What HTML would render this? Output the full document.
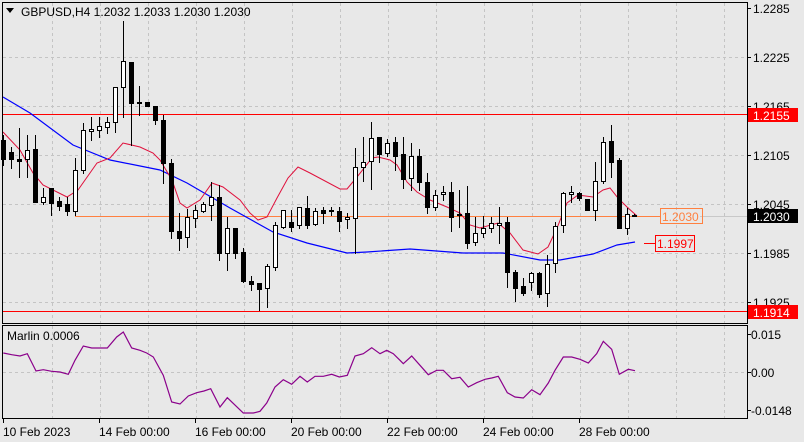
<!DOCTYPE html>
<html><head><meta charset="utf-8"><style>
html,body{margin:0;padding:0;background:#e8e8e8;width:804px;height:442px;overflow:hidden}
svg{display:block}
text{font-family:"Liberation Sans",sans-serif;font-size:12px;fill:#000}
</style></head><body>
<svg id="s" width="804" height="442" xmlns="http://www.w3.org/2000/svg">
<rect x="0" y="0" width="804" height="442" fill="#e8e8e8"/>
<g id="grid" stroke="#c4c4c4" stroke-dasharray="3,3" stroke-width="1"></g>
<line x1="2" y1="114.5" x2="747" y2="114.5" stroke="#ff0000"/>
<line x1="2" y1="311.5" x2="747" y2="311.5" stroke="#ff0000"/>
<line x1="700" y1="216.5" x2="747" y2="216.5" stroke="#c8c8c8"/>
<line x1="75" y1="216.5" x2="660" y2="216.5" stroke="#ff8040"/>
<polyline id="blue" fill="none" stroke="#0000ff" stroke-width="1.2"/>
<polyline id="red" fill="none" stroke="#e0103c" stroke-width="1"/>
<g id="candles"></g>
<polyline id="marlin" fill="none" stroke="#8b008b" stroke-width="1.2"/>
<rect x="2.5" y="2.5" width="745" height="321" fill="none" stroke="#000"/>
<rect x="2.5" y="325.5" width="745" height="93" fill="none" stroke="#000"/>
<rect x="660.5" y="208.5" width="42" height="15" fill="none" stroke="#ff8040"/>
<text x="662" y="221" style="fill:#ff8040">1.2030</text>
<line x1="644" y1="243.5" x2="655" y2="243.5" stroke="#ff0000"/>
<rect x="655.5" y="235.5" width="39" height="16" fill="none" stroke="#ff0000"/>
<text x="657" y="248" style="fill:#ff0000">1.1997</text>
<path d="M6 8 L14 8 L10 13 Z" fill="#000"/>
<text x="21" y="16">GBPUSD,H4  1.2032 1.2033 1.2030 1.2030</text>
<text x="7" y="340">Marlin 0.0006</text>
<g id="axis"></g>
<rect x="748" y="108" width="50" height="14" fill="#ff0000"/>
<text x="753" y="120" style="fill:#fff">1.2155</text>
<rect x="748" y="209" width="50" height="14" fill="#000"/>
<text x="753" y="221" style="fill:#fff">1.2030</text>
<rect x="748" y="305" width="50" height="14" fill="#ff0000"/>
<text x="753" y="317" style="fill:#fff">1.1914</text>
<text x="751" y="339">0.015</text>
<text x="751" y="377">0.00</text>
<text x="751" y="415">-0.0148</text>
<g id="dates"></g>
</svg>
<script>
var NS="http://www.w3.org/2000/svg";
function el(p,t,a,txt){var e=document.createElementNS(NS,t);for(var k in a)e.setAttribute(k,a[k]);if(txt)e.textContent=txt;document.getElementById(p).appendChild(e);return e;}
for(var x=52;x<=724;x+=48){el('grid','line',{x1:x+.5,y1:3,x2:x+.5,y2:323});el('grid','line',{x1:x+.5,y1:326,x2:x+.5,y2:418});}
[57,106,155,204,253,302].forEach(function(y){el('grid','line',{x1:3,y1:y+.5,x2:747,y2:y+.5});});
el('grid','line',{x1:3,y1:372.5,x2:747,y2:372.5});
[["1.2285",8],["1.2225",57],["1.2165",106],["1.2105",155],["1.2045",204],["1.1985",253],["1.1925",302]].forEach(function(a){
el('axis','line',{x1:747,y1:a[1]+.5,x2:751,y2:a[1]+.5,stroke:'#000'});el('axis','text',{x:753,y:a[1]+5},a[0]);});
[334,372,410].forEach(function(y){el('axis','line',{x1:747,y1:y+.5,x2:751,y2:y+.5,stroke:'#000'});});
[["10 Feb 2023",3],["14 Feb 00:00",99],["16 Feb 00:00",195],["20 Feb 00:00",291],["22 Feb 00:00",387],["24 Feb 00:00",483],["28 Feb 00:00",579]].forEach(function(a){
el('dates','line',{x1:a[1]+.5,y1:418,x2:a[1]+.5,y2:423,stroke:'#000'});el('dates','text',{x:a[1],y:436},a[0]);});
var C=[[135,140,159,165,0],[147,152,159,168,0],[128,159,161,177,0],[135,150,159,177,1],[135,149,202,202,0],[188,197,202,204,1],[188,188,203,215,0],[197,201,206,210,0],[197,204,211,215,0],[158,170,211,215,1],
[123,130,170,173,1],[117,129,131,140,1],[117,126,130,137,1],[117,122,127,133,1],[87,87,122,132,1],[21,61,87,117,1],[62,62,103,145,0],[86,102,103,115,0],[102,102,106,106,0],[106,106,120,124,0],
[115,120,163,183,0],[159,163,231,238,0],[213,231,238,250,0],[209,217,237,247,1],[205,210,218,227,1],[202,204,211,212,1],[182,197,205,220,1],[185,197,253,260,0],[217,228,253,270,1],[228,228,253,258,0],
[248,252,281,282,0],[276,281,284,290,0],[283,283,289,310,0],[264,266,288,307,1],[222,225,267,270,1],[210,210,227,228,1],[210,222,227,231,0],[207,207,225,228,1],[196,208,225,228,0],[208,211,224,225,1],
[207,210,213,223,0],[207,210,211,215,0],[207,211,221,231,0],[213,217,219,228,1],[148,167,218,253,1],[137,162,167,181,1],[122,138,161,189,1],[137,137,154,162,0],[139,143,153,156,1],[137,142,156,170,0],
[137,154,179,188,0],[143,156,178,190,1],[149,156,182,190,0],[173,182,207,213,0],[190,195,207,210,1],[186,192,194,200,1],[182,192,217,231,0],[190,214,215,227,0],[186,213,243,248,0],[217,233,242,245,1],
[216,228,233,237,1],[217,223,228,232,1],[207,223,225,243,1],[217,222,272,287,0],[270,272,288,301,0],[278,286,293,295,0],[272,273,282,290,1],[272,273,294,297,0],[255,264,293,306,1],[222,226,263,272,1],
[192,193,225,232,1],[186,192,194,202,1],[192,193,198,200,0],[199,199,210,210,0],[162,181,210,220,1],[137,142,181,183,1],[125,141,162,177,0],[158,160,228,228,0],[208,214,228,234,1],[214,215,216,216,0]];
C.forEach(function(c,i){var x=3+8*i;if(i==79)x=634;
el('candles','line',{x1:x+.5,y1:c[0],x2:x+.5,y2:c[3]+1,stroke:'#000'});
var h=Math.max(c[2]-c[1],1);
el('candles','rect',{x:x-1.5,y:c[1]+.5,width:4,height:h,fill:c[4]?'#fff':'#000',stroke:'#000'});});
document.getElementById('red').setAttribute('points',"3,132 20,150 33,173 43,185 67,197 78,190 97,163 110,158 123,143 140,147 153,153 160,160 172,180 180,203 187,208 200,200 212,183 223,187 240,200 250,213 258,220 267,217 277,198 288,178 298,167 310,173 340,189 347,189 357,177 372,158 378,157 390,160 397,165 407,182 417,192 430,200 447,207 460,213 470,225 480,228 498,223 510,233 523,250 538,254 548,247 557,228 567,203 578,195 593,197 603,190 610,188 618,198 627,207 637,216");
document.getElementById('blue').setAttribute('points',"3,97 30,113 73,145 110,160 160,170 187,183 230,208 273,232 307,243 347,253 367,252 410,249 463,253 503,253 540,260 560,260 593,254 617,245 635,242");
var m=[[10,93],[35,98],[60,102],[82,95],[108,147],[130,143],[155,148],[180,150],[205,157],[225,115],[250,72],[275,78],[322,78],[350,45],[370,30],[395,78],[420,85],[440,93],[460,105],[490,160],[515,240],[540,246],[565,222],[590,212],[612,207],[632,200],[660,255],[682,227],[730,273],[760,273],[780,268],[800,243],[825,195],[850,173],[875,187],[900,163],[922,180],[945,163],[970,163],[995,157],[1018,165],[1042,160],[1065,102],[1090,95],[1115,77],[1140,95],[1160,85],[1180,95],[1200,115]];
var pts=m.map(function(p){return (p[0]/3).toFixed(1)+","+(p[1]/3+322).toFixed(1)});
var m2=[[10,125],[35,102],[60,130],[85,158],[110,145],[130,145],[155,170],[180,166],[205,195],[230,182],[255,172],[275,168],[295,163],[322,212],[345,225],[370,228],[395,203],[420,218],[445,183],[465,145],[490,105],[515,105],[540,112],[565,123],[590,95],[610,58],[635,82],[658,157],[685,142],[705,146]];
m2.forEach(function(p){pts.push((p[0]/3+400).toFixed(1)+","+(p[1]/3+322).toFixed(1));});
document.getElementById('marlin').setAttribute('points',pts.join(" "));
</script>
</body></html>
